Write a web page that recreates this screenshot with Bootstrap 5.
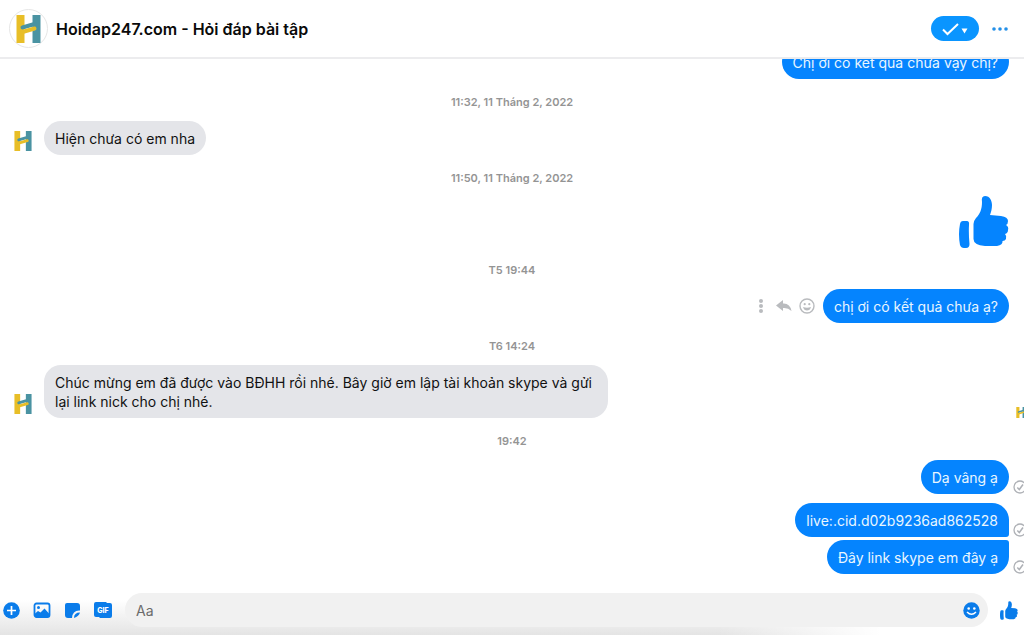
<!DOCTYPE html>
<html lang="vi">
<head>
<meta charset="utf-8">
<meta name="viewport" content="width=device-width, initial-scale=1">
<title>Hoidap247.com - Hỏi đáp bài tập</title>
<link href="https://cdn.jsdelivr.net/npm/bootstrap@5.3.0/dist/css/bootstrap.min.css" rel="stylesheet">
<style>
  body { font-family: Inter, "Noto Sans", sans-serif; font-size: 14px; line-height: 19px; color: #111; background: #fff; }
  svg { display: block; overflow: visible; flex: none; }
  .icon-btn { border: 0; background: none; padding: 0; color: #0a7cea; display: block; }
  .chat-head { height: 59px; padding: 0 16px 0 9px; border-bottom: 2px solid #ececee; }
  .head-logo { width: 39px; height: 39px; border: 1px solid #e6e6e6; border-radius: 50%; }
  .chat-title { font-size: 16px; line-height: 24px; font-weight: 600; color: #0a0a0a; }
  .done-btn { width: 48px; height: 25px; margin-right: 13px; border: 0; border-radius: 13px; background: #0a95ff; color: #fff; }
  .thread { min-height: 0; padding-bottom: 11px; }
  .msg-row { flex: none; }
  .incoming { padding-left: 9px; gap: 7px; }
  .avatar { width: 28px; height: 28px; flex: none; }
  .bubble { padding: 8px 11px 7px; border-radius: 17px; background: #e4e5e9; max-width: 564px; }
  .mine { background: #0584fe; color: #e9f6ff; }
  .join-below { border-bottom-right-radius: 3px; }
  .join-above { border-top-right-radius: 3px; }
  .next-turn { margin-top: 9px; }
  .next-line { margin-top: 3px; }
  .receipt { width: 15px; padding-left: 4px; flex: none; color: #aeb1b6; }
  .seen { width: 9px; flex: none; }
  .stamp { flex: none; padding: 15px 0 11px; font-size: 11px; line-height: 16px; font-weight: 600; color: #949494; text-align: center; }
  .tools { gap: 7px; margin-right: 8px; color: #b9bbbe; }
  .tools .icon-btn { color: inherit; }
  .composer { height: 50px; padding: 0 6px 0 3px; background: linear-gradient(90deg, rgba(255,255,255,0) 70%, #fff 86%), linear-gradient(#fff 30%, #e4e4e4); }
  .composer-tools { gap: 13px; width: 110px; }
  .entry { height: 34px; border-radius: 17px; margin: 0 12px; padding: 0 8px 0 11px; background: #f1f1f1; }
  .entry input { border: 0; background: none; padding: 0; outline: 0; font-size: 14px; color: #111; }
  .entry input::placeholder { color: #6b6b6b; opacity: 1; }
</style>
</head>
<body>
<svg width="0" height="0" class="position-absolute" aria-hidden="true">
  <symbol id="logo" viewBox="0 0 24 28">
    <path fill="#e8be27" d="M0 0h8v28H0z"/><path fill="#4a93a2" d="M16 0h8v28h-8z"/>
    <path fill="none" stroke="#4a93a2" stroke-width="4" stroke-linecap="round" d="M6 12.500L18 9"/>
    <path fill="none" stroke="#e8be27" stroke-width="4" stroke-linecap="round" d="M6 17L18 13.500"/>
  </symbol>
  <symbol id="like" viewBox="0 0 50 52">
    <path d="M4 25H8Q10.500 25 10 29Q9.500 38 10.500 48Q10.500 52 7 52H5Q2 52 1 49Q-1 38 1 28Q1.500 25 4 25z"/>
    <path d="M14.500 28Q14.500 25 17 22C21 18 23 13 23 6Q22 0 26 0C31 0 33 5 33 9C33 13 32 16 31 19L42 20Q49 21 49 25Q49 28 47 29Q50 31 49 34Q49 37 46 38Q48 40 47 43Q46 45 43.500 45Q44 49 38 50H26Q14.500 49 14.500 43z"/>
  </symbol>
  <symbol id="sent" viewBox="0 0 14 14">
    <circle cx="7" cy="7" r="6" fill="none" stroke="currentColor" stroke-width="1.300"/>
    <path d="M4.300 7.500L6.300 9.500L10 4.500" fill="none" stroke="currentColor" stroke-width="1.500"/>
  </symbol>
</svg>

<div class="d-flex flex-column vh-100 overflow-hidden">
  <header class="chat-head d-flex align-items-center flex-shrink-0">
    <div class="head-logo d-flex align-items-center justify-content-center flex-shrink-0"><svg width="25" height="28"><use href="#logo"/></svg></div>
    <h1 class="chat-title mb-0 ms-2 me-auto text-truncate">Hoidap247.com - Hỏi đáp bài tập</h1>
    <button class="done-btn d-flex align-items-center justify-content-center flex-shrink-0 p-0" type="button" aria-label="Đánh dấu xong">
      <svg width="28" height="16" viewBox="0 0 28 16"><path d="M2 8.500L6.500 13L17 3" fill="none" stroke="currentColor" stroke-width="2"/><path d="M20.500 7.500h6L23.500 12.500z" fill="currentColor"/></svg>
    </button>
    <button class="icon-btn" type="button" aria-label="Thêm"><svg width="16" height="6" viewBox="-2 0 16 6" fill="#2390e8"><circle cx="0" cy="3" r="1.800"/><circle cx="6" cy="3" r="1.800"/><circle cx="12" cy="3" r="1.800"/></svg></button>
  </header>

  <main class="thread flex-grow-1 d-flex flex-column justify-content-end overflow-hidden">
    <div class="msg-row d-flex justify-content-end"><div class="bubble mine">Chị ơi có kết quả chưa vậy chị?</div><span class="receipt"></span></div>
    <div class="stamp">11:32, 11 Tháng 2, 2022</div>
    <div class="msg-row incoming d-flex align-items-end">
      <div class="avatar d-flex align-items-center justify-content-center"><svg width="18" height="20"><use href="#logo"/></svg></div>
      <div class="bubble">Hiện chưa có em nha</div>
    </div>
    <div class="stamp">11:50, 11 Tháng 2, 2022</div>
    <div class="msg-row d-flex justify-content-end"><svg width="50" height="50" viewBox="0 1 50 50" fill="#0584fe" role="img" aria-label="Thích"><use href="#like" width="50" height="52"/></svg><span class="receipt"></span></div>
    <div class="stamp">T5 19:44</div>
    <div class="msg-row d-flex justify-content-end align-items-center">
      <div class="tools d-flex align-items-center">
        <button class="icon-btn" type="button" aria-label="Tùy chọn"><svg width="16" height="16" fill="currentColor"><circle cx="8" cy="3" r="2"/><circle cx="8" cy="8" r="2"/><circle cx="8" cy="13" r="2"/></svg></button>
        <button class="icon-btn" type="button" aria-label="Trả lời"><svg width="16" height="16" fill="currentColor"><path d="M0 7.500L7 2v3.500Q14 5 15.500 13Q12 9.500 7 10v3z"/></svg></button>
        <button class="icon-btn" type="button" aria-label="Bày tỏ cảm xúc"><svg width="16" height="16" fill="currentColor"><circle cx="8" cy="8" r="7" fill="none" stroke="currentColor" stroke-width="1.400"/><circle cx="5.700" cy="6.200" r="1.100"/><circle cx="10.300" cy="6.200" r="1.100"/><path d="M4 9Q8 10.500 12 9Q11 12.500 8 12.500T4 9z"/></svg></button>
      </div>
      <div class="bubble mine">chị ơi có kết quả chưa ạ?</div><span class="receipt"></span>
    </div>
    <div class="stamp">T6 14:24</div>
    <div class="msg-row incoming d-flex align-items-end">
      <div class="avatar d-flex align-items-center justify-content-center"><svg width="18" height="20"><use href="#logo"/></svg></div>
      <div class="bubble">Chúc mừng em đã được vào BĐHH rồi nhé. Bây giờ em lập tài khoản skype và gửi lại link nick cho chị nhé.</div>
      <span class="seen ms-auto"><svg width="12" height="11"><use href="#logo"/></svg></span>
    </div>
    <div class="stamp">19:42</div>
    <div class="msg-row d-flex justify-content-end align-items-end"><div class="bubble mine">Dạ vâng ạ</div><span class="receipt"><svg width="14" height="14"><use href="#sent"/></svg></span></div>
    <div class="msg-row next-turn d-flex justify-content-end align-items-end"><div class="bubble mine join-below">live:.cid.d02b9236ad862528</div><span class="receipt"><svg width="14" height="14"><use href="#sent"/></svg></span></div>
    <div class="msg-row next-line d-flex justify-content-end align-items-end"><div class="bubble mine join-above">Đây link skype em đây ạ</div><span class="receipt"><svg width="14" height="14"><use href="#sent"/></svg></span></div>
  </main>

  <footer class="composer d-flex align-items-center flex-shrink-0">
    <div class="composer-tools d-flex align-items-center flex-shrink-0">
      <button class="icon-btn" type="button" aria-label="Mở thêm"><svg width="17" height="17"><circle cx="8.500" cy="8.500" r="8.300" fill="currentColor"/><path d="M8.500 4v9M4 8.500h9" stroke="#fff" stroke-width="1.700"/></svg></button>
      <button class="icon-btn" type="button" aria-label="Gửi ảnh"><svg width="18" height="17"><rect x="1.500" y="1.500" width="15" height="13.500" rx="2" fill="none" stroke="currentColor" stroke-width="1.800"/><circle cx="5.500" cy="5.500" r="1.500" fill="currentColor"/><path d="M2 11.500L5 9L7.500 10.500L11.500 6.500L16 11.500v3H2z" fill="currentColor"/></svg></button>
      <button class="icon-btn" type="button" aria-label="Nhãn dán"><svg width="17" height="17" fill="currentColor"><path d="M3 1h10q3 0 3 3v4.500Q8.500 8 8 16H4q-3 0-3-3V3q0-2 2-2z"/><path d="M10 16Q10 10.500 16 10.500Q15 14 10 16z"/></svg></button>
      <button class="icon-btn" type="button" aria-label="GIF"><svg width="18" height="17"><path d="M2 0h10l1 1h3q2 0 2 2v11q0 2-2 2H6l-1-1H2q-2 0-2-2V2q0-2 2-2z" fill="currentColor"/><text x="9" y="11" text-anchor="middle" font-size="7" font-weight="800" fill="#fff">GIF</text></svg></button>
    </div>
    <div class="entry d-flex align-items-center flex-grow-1">
      <input class="flex-grow-1" type="text" placeholder="Aa" aria-label="Tin nhắn">
      <button class="icon-btn" type="button" aria-label="Biểu tượng cảm xúc"><svg width="17" height="17"><circle cx="8.500" cy="8.500" r="8.200" fill="currentColor"/><circle cx="5.700" cy="6.500" r="1.300" fill="#fff"/><circle cx="11.300" cy="6.500" r="1.300" fill="#fff"/><path d="M4 10Q8.500 14.500 13 10" fill="none" stroke="#fff" stroke-width="1.500"/></svg></button>
    </div>
    <button class="icon-btn" type="button" aria-label="Gửi lượt thích"><svg width="18" height="19" fill="currentColor"><use href="#like"/></svg></button>
  </footer>
</div>
<script src="https://cdn.jsdelivr.net/npm/bootstrap@5.3.0/dist/js/bootstrap.bundle.min.js"></script>
</body>
</html>
